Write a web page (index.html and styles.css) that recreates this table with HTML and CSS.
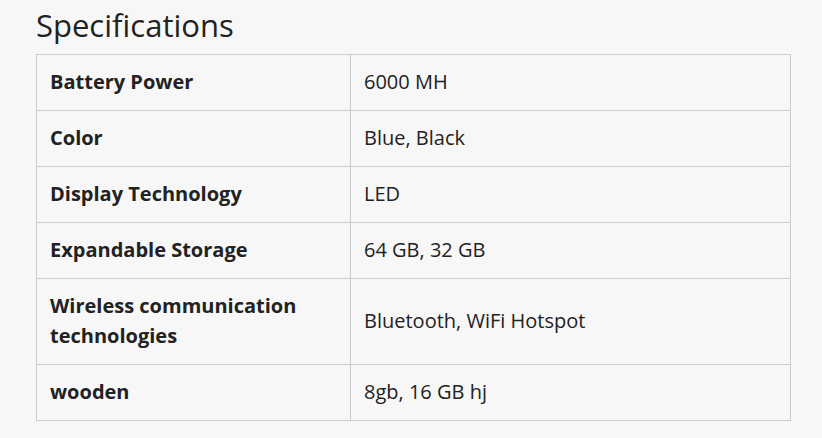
FILE: index.html
```html
<!DOCTYPE html>
<html>
<head>
<meta charset="utf-8">
<link rel="stylesheet" href="styles.css">
</head>
<body>
<section class="specs">
  <h2 class="specs-title">Specifications</h2>
  <table class="specs-table">
    <tbody>
      <tr><th>Battery Power</th><td>6000 MH</td></tr>
      <tr><th>Color</th><td>Blue, Black</td></tr>
      <tr><th>Display Technology</th><td>LED</td></tr>
      <tr><th>Expandable Storage</th><td>64 GB, 32 GB</td></tr>
      <tr><th>Wireless communication technologies</th><td>Bluetooth, WiFi Hotspot</td></tr>
      <tr><th>wooden</th><td>8gb, 16 GB hj</td></tr>
    </tbody>
  </table>
</section>
</body>
</html>
```

FILE: styles.css
```css
html, body {
  margin: 0;
  padding: 0;
  background: #f7f7f7;
}
body {
  font-family: "Open Sans", "Noto Sans", sans-serif;
  color: #222;
}
.specs {
  padding: 5px 32px 0 36px;
}
.specs-title {
  margin: 0 0 8px 0;
  font-size: 31px;
  font-weight: 400;
  line-height: 41px;
  color: #222;
}
.specs-table {
  width: 755px;
  border-collapse: collapse;
  font-size: 20px;
  line-height: 30px;
}
.specs-table th,
.specs-table td {
  border: 1px solid #cccccc;
  padding: 12px 13px 13px;
  text-align: left;
  vertical-align: middle;
}
.specs-table th {
  width: 287px;
  font-weight: 700;
}
.specs-table td {
  font-weight: 400;
}
```
